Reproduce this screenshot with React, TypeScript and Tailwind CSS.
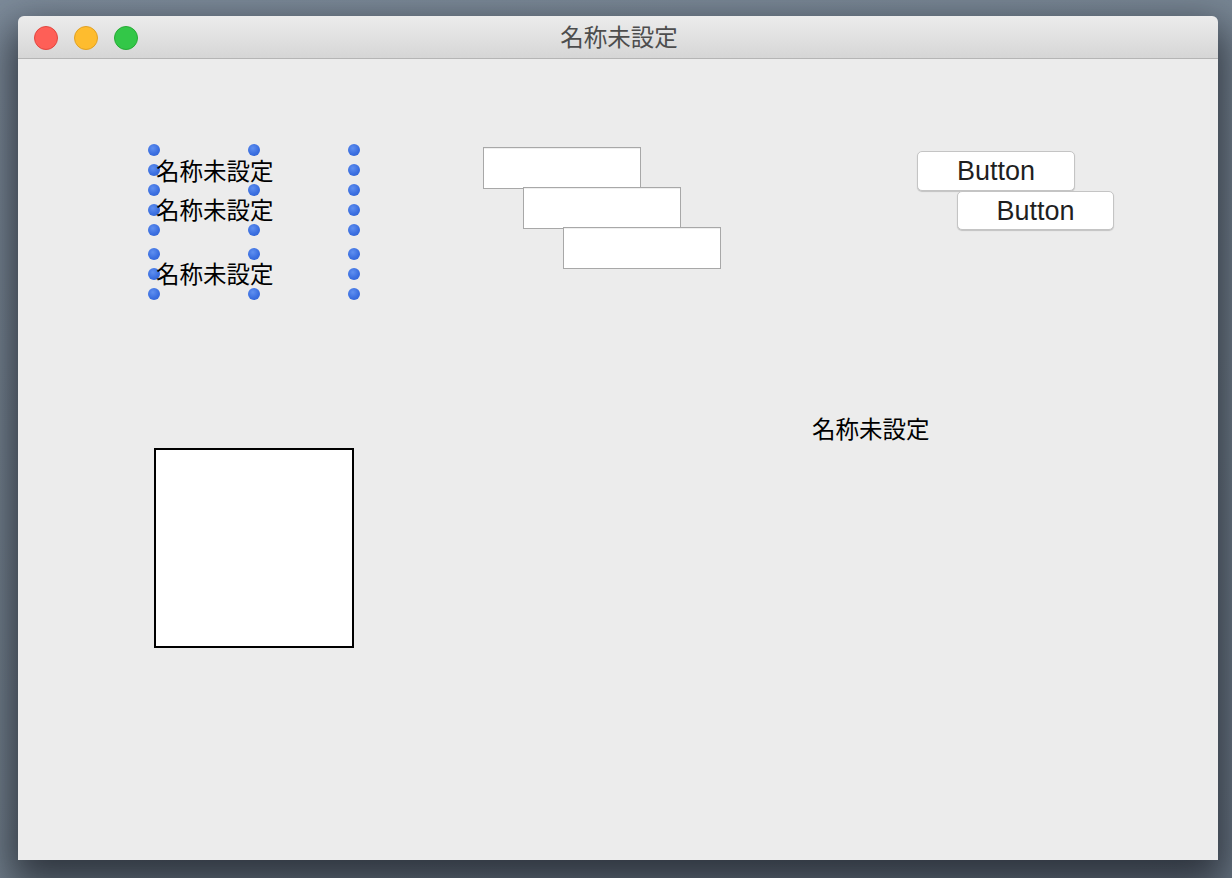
import React from "react";

const JP = { fontFamily: '"Noto Sans CJK JP", "Noto Sans", sans-serif' };

function Dot() {
  return (
    <div className="w-[12px] h-[12px] rounded-full bg-[radial-gradient(circle_at_40%_35%,#5f8ff0_0%,#3b6fe0_55%,#2f5fcf_100%)]" />
  );
}

function DotColumn({ full }: { full: boolean }) {
  if (full) {
    return (
      <div className="flex flex-col gap-[12px]">
        <div className="flex flex-col gap-[8px]">
          <Dot />
          <Dot />
          <Dot />
          <Dot />
          <Dot />
        </div>
        <div className="flex flex-col gap-[8px]">
          <Dot />
          <Dot />
          <Dot />
        </div>
      </div>
    );
  }
  return (
    <div className="flex flex-col">
      <Dot />
      <div className="mt-[28px]">
        <Dot />
      </div>
      <div className="mt-[28px]">
        <Dot />
      </div>
      <div className="mt-[12px]">
        <Dot />
      </div>
      <div className="mt-[28px]">
        <Dot />
      </div>
    </div>
  );
}

function TextField() {
  return <div className="w-[158px] h-[42px] bg-white border border-[#a8a8a8] shadow-[inset_0_1px_0_#efefef]" />;
}

function Btn({ w, h }: { w: number; h: number }) {
  return (
    <div
      className="flex items-center justify-center pt-[1px] bg-white rounded-[5px] border border-[#c4c4c4] shadow-[0_1px_1px_rgba(0,0,0,0.18)] text-[#1f1f1f] text-[27px] leading-none"
      style={{ width: w, height: h, fontFamily: '"Liberation Sans", Arial, sans-serif' }}
    >
      Button
    </div>
  );
}

function Label() {
  return (
    <div className="text-[23.5px] leading-[28px] text-black whitespace-nowrap" style={JP}>
      名称未設定
    </div>
  );
}

export default function App() {
  return (
    <div className="w-[1232px] h-[878px] overflow-hidden bg-[linear-gradient(160deg,#7d8b9a_0%,#74828f_60%,#6a7785_100%)] pl-[18px] pt-[16px]">
      <div className="w-[1200px] h-[844px] flex flex-col rounded-t-[6px] overflow-hidden shadow-[0_18px_40px_8px_rgba(25,30,38,0.75)]">
        {/* Title bar */}
        <div className="relative h-[43px] shrink-0 flex items-center bg-[linear-gradient(#ececec,#d6d6d6)] border-b border-[#b5b5b5]">
          <div className="flex items-center gap-[16px] pl-[16px] pt-[1px]">
            <div className="w-[24px] h-[24px] rounded-full bg-[#fe5f57] border border-[#e2463f]" />
            <div className="w-[24px] h-[24px] rounded-full bg-[#febc2e] border border-[#e1a123]" />
            <div className="w-[24px] h-[24px] rounded-full bg-[#33c748] border border-[#26ab35]" />
          </div>
          <div
            className="absolute inset-0 flex items-center justify-center text-[23.5px] text-[#4d4d4d] pb-[1px] pl-[2px]"
            style={JP}
          >
            名称未設定
          </div>
        </div>

        {/* Content canvas (free-form placement of controls) */}
        <div className="relative flex-1 bg-[#ececec]">
          {/* selected label group with handles */}
          <div className="absolute left-[130px] top-[85px]">
            <div className="flex gap-[88px]">
              <DotColumn full />
              <DotColumn full={false} />
              <DotColumn full />
            </div>
            <div className="absolute left-[8px] top-[12px] flex flex-col gap-[11px]">
              <Label />
              <div className="flex flex-col gap-[36px]">
                <Label />
                <Label />
              </div>
            </div>
          </div>

          {/* staggered text fields */}
          <div className="absolute left-[465px] top-[88px] flex flex-col">
            <TextField />
            <div className="ml-[40px] -mt-[2px]">
              <TextField />
            </div>
            <div className="ml-[80px] -mt-[2px]">
              <TextField />
            </div>
          </div>

          {/* staggered buttons */}
          <div className="absolute left-[899px] top-[92px] flex flex-col">
            <Btn w={158} h={40} />
            <div className="ml-[40px]">
              <Btn w={157} h={39} />
            </div>
          </div>

          <div className="absolute left-[794px] top-[355px]">
            <Label />
          </div>

          <div className="absolute left-[136px] top-[389px] w-[200px] h-[200px] bg-white border-2 border-black" />
        </div>
      </div>
    </div>
  );
}
